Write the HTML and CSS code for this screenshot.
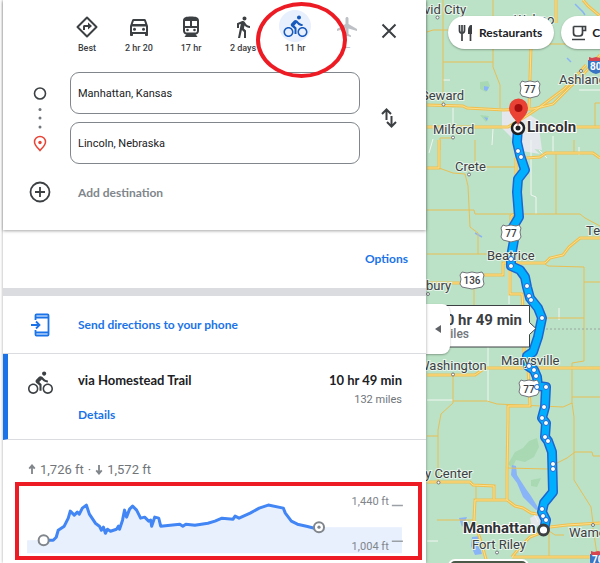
FILE: index.html
```
<!DOCTYPE html>
<html lang="en">
<head>
    <meta charset="UTF-8">
    <meta name="viewport" content="width=device-width, initial-scale=1.0">
    <title>Manhattan, Kansas to Lincoln, Nebraska</title>
    <link rel="stylesheet" href="styles.css">
</head>
<body>
    <main class="panel">
        <form class="search">
            <div class="modes">
                <button type="button" class="mode">
                    <svg viewBox="0 0 24 24"><path d="M12 2.500L21.500 12L12 21.500L2.500 12Z" fill="none" stroke="#3c4043" stroke-width="2" stroke-linejoin="round"/><path d="M8 15v-3.500c0-.8.7-1.500 1.500-1.500H13V7.500l4 3.500-4 3.500V12h-3v3z"/></svg>
                    <span>Best</span>
                </button>
                <button type="button" class="mode">
                    <svg viewBox="0 0 24 24"><path d="M18.920 5.010C18.720 4.420 18.160 4 17.500 4h-11c-.66 0-1.210.42-1.420 1.010L3 11v9c0 .55.45 1 1 1h1c.55 0 1-.45 1-1v-1h12v1c0 .55.45 1 1 1h1c.55 0 1-.45 1-1v-9l-2.080-5.990zM6.850 6h10.290l1.080 3.110H5.770L6.850 6zM19 17H5v-5.500h14V17z"/><circle cx="7.500" cy="14.200" r="1.500"/><circle cx="16.500" cy="14.200" r="1.500"/></svg>
                    <span>2 hr 20</span>
                </button>
                <button type="button" class="mode">
                    <svg viewBox="0 0 24 24"><path d="M12 1.500c-4.500 0-8 .5-8 4.200V16c0 1.900 1.600 3.500 3.500 3.500h9c1.900 0 3.500-1.600 3.500-3.500V5.700c0-3.700-3.500-4.200-8-4.200zM6 6h5v5H6zm7 0h5v5h-5zM6 13h12v3c0 .8-.7 1.500-1.500 1.500h-9C6.700 17.500 6 16.800 6 16z" fill-rule="evenodd"/><circle cx="8.500" cy="15" r="1.300"/><circle cx="15.500" cy="15" r="1.300"/><path d="M7.500 19h9l2 3h-13z"/></svg>
                    <span>17 hr</span>
                </button>
                <button type="button" class="mode">
                    <svg viewBox="0 0 24 24"><path d="M13.500 5.500c1.100 0 2-.9 2-2s-.9-2-2-2-2 .9-2 2 .9 2 2 2zM9.800 8.900L7 23h2.100l1.800-8 2.100 2v6h2v-7.500l-2.100-2 .6-3C14.800 12 16.800 13 19 13v-2c-1.900 0-3.500-1-4.300-2.400l-1-1.600c-.4-.6-1-1-1.700-1-.3 0-.5.1-.8.100L6 8.300V13h2V9.600l1.800-.7"/></svg>
                    <span>2 days</span>
                </button>
                <button type="button" class="mode active">
                    <i class="halo"></i>
                    <svg viewBox="0 0 24 24"><path d="M15.500 4.500c1.100 0 2-.9 2-2s-.9-2-2-2-2 .9-2 2 .9 2 2 2zM5 12c-2.800 0-5 2.200-5 5s2.200 5 5 5 5-2.200 5-5-2.200-5-5-5zm0 8.500c-1.900 0-3.500-1.600-3.500-3.500s1.600-3.500 3.500-3.500 3.500 1.600 3.500 3.500-1.600 3.500-3.500 3.500zm5.800-10l2.400-2.400.8.800c1.300 1.300 3 2.100 5.100 2.100V9c-1.500 0-2.700-.6-3.600-1.500l-1.900-1.900c-.5-.4-1-.6-1.600-.6s-1.100.2-1.400.6L7.800 8.400c-.4.4-.6.9-.6 1.400 0 .6.200 1.100.6 1.400L11 14v5h2v-6.200l-2.200-2.300zM19 12c-2.800 0-5 2.200-5 5s2.200 5 5 5 5-2.200 5-5-2.200-5-5-5zm0 8.500c-1.900 0-3.500-1.600-3.500-3.500s1.600-3.500 3.500-3.500 3.500 1.600 3.500 3.500-1.600 3.500-3.500 3.500z"/></svg>
                    <span>11 hr</span>
                    <i class="marker-ring"></i>
                </button>
                <button type="button" class="mode disabled">
                    <svg viewBox="0 0 24 24"><path d="M22 16v-2l-8.500-5V3.500c0-.83-.67-1.500-1.500-1.500s-1.500.67-1.500 1.500V9L2 14v2l8.500-2.500V19L8 20.500V22l4-1 4 1v-1.500L13.500 19v-5.500L22 16z"/></svg>
                    <span>—</span>
                </button>
                <button type="button" class="close" aria-label="Close">
                    <svg viewBox="0 0 16 16"><path d="M1.500 1.500l13 13M14.500 1.500l-13 13" stroke="#3c4043" stroke-width="2"/></svg>
                </button>
            </div>

            <div class="stops">
                <svg class="stop-icons" viewBox="0 0 40 92">
                    <circle cx="20" cy="21.500" r="5.500" fill="none" stroke="#3c4043" stroke-width="1.600"/>
                    <g fill="#70757a"><circle cx="20" cy="37.500" r="1.500"/><circle cx="20" cy="46" r="1.500"/><circle cx="20" cy="55" r="1.500"/></g>
                    <path d="M20 78.500c-3-3.500-5.500-5.700-5.500-8.600a5.500 5.500 0 0 1 11 0c0 2.900-2.500 5.100-5.500 8.600z" fill="none" stroke="#ea4335" stroke-width="1.500"/>
                    <circle cx="20" cy="70.500" r="1.700" fill="#ea4335"/>
                </svg>
                <div class="fields">
                    <input type="text" aria-label="Starting point" value="Manhattan, Kansas">
                    <input type="text" aria-label="Destination" value="Lincoln, Nebraska">
                </div>
                <button type="button" class="swap" aria-label="Reverse starting point and destination">
                    <svg viewBox="0 0 16 20"><path d="M5.500 12V2M1 6l4.500-4.500L10 6M10.500 8v10M6 14l4.500 4.500L15 14" fill="none" stroke="#3c4043" stroke-width="2"/></svg>
                </button>
            </div>

            <button type="button" class="add">
                <svg viewBox="0 0 22 22"><path d="M11 6v10M6 11h10" stroke="#3c4043" stroke-width="1.800"/><circle cx="11" cy="11" r="9.500" fill="none" stroke="#3c4043" stroke-width="1.800"/></svg>
                <span>Add destination</span>
            </button>
        </form>

        <div class="results">
            <div class="options"><a href="#options">Options</a></div>

            <a class="send" href="#send">
                <svg viewBox="0 0 20 24"><path d="M5.500 7V2.500c0-.6.400-1 1-1h11c.6 0 1 .4 1 1v19c0 .6-.4 1-1 1h-11c-.6 0-1-.4-1-1V17M5.500 4.500h13M5.500 19.500h13M1 12h8M6 8.500L9.500 12 6 15.500" fill="none" stroke="#1a73e8" stroke-width="1.800"/></svg>
                <span>Send directions to your phone</span>
            </a>

            <section class="route">
                <svg class="route-icon" viewBox="0 0 24 24"><path d="M15.500 4.500c1.100 0 2-.9 2-2s-.9-2-2-2-2 .9-2 2 .9 2 2 2zM5 12c-2.800 0-5 2.200-5 5s2.200 5 5 5 5-2.200 5-5-2.200-5-5-5zm0 8.500c-1.900 0-3.500-1.600-3.500-3.500s1.600-3.500 3.500-3.500 3.500 1.600 3.500 3.500-1.600 3.500-3.500 3.500zm5.800-10l2.400-2.400.8.800c1.300 1.300 3 2.100 5.100 2.100V9c-1.500 0-2.700-.6-3.600-1.500l-1.900-1.900c-.5-.4-1-.6-1.600-.6s-1.100.2-1.400.6L7.800 8.400c-.4.400-.6.900-.6 1.400 0 .6.200 1.100.6 1.400L11 14v5h2v-6.200l-2.200-2.300zM19 12c-2.800 0-5 2.200-5 5s2.200 5 5 5 5-2.200 5-5-2.200-5-5-5zm0 8.500c-1.900 0-3.500-1.600-3.500-3.500s1.600-3.500 3.500-3.500 3.500 1.600 3.500 3.500-1.600 3.500-3.500 3.500z"/></svg>
                <div class="route-name">
                    <h1>via Homestead Trail</h1>
                    <a href="#details">Details</a>
                </div>
                <div class="route-time">
                    <strong>10 hr 49 min</strong>
                    <span>132 miles</span>
                </div>
            </section>

            <p class="climb">
                <svg viewBox="0 0 8 12"><path d="M4 11V2M1 5l3-3.500L7 5" fill="none" stroke="#80868b" stroke-width="2"/></svg>
                <span>1,726 ft</span>
                <span>·</span>
                <svg viewBox="0 0 8 12"><path d="M4 1v9M1 7l3 3.500L7 7" fill="none" stroke="#80868b" stroke-width="2"/></svg>
                <span>1,572 ft</span>
            </p>

            <div class="elevation">
                <svg viewBox="20 486 397 70">
                    <path class="area" d="M28 540H44L54 540 58 536 60 529 66 523 70 515 72 511 76 515 81 513 87 505 90 512 96 523 101 527 107 533 117 529 122 523 125 510 127 516 131 507 135 507 142 518 149 521 152 525 155 517 161 526 180 524 198 523 212 521 222 518 234 518 250 512 260 508 268 505 283 508 291 521 299 525 310 527H401V553H28Z"/>
                    <path class="line" d="M44 540L54 540 57 537 59 530 65 526 69 518 71 511 75 515 78 512 80 514 83 508 87 505 90 514 96 523 100 526 102 530 104 527 106 533 108 529 111 531 117 529 119 526 120 529 123 520 125 510 127 517 130 509 133 506 137 510 141 518 145 517 149 521 151 520 152 526 155 517 159 518 161 526 180 524 183 526 186 524 195 525 208 523 215 521 222 518 233 519 235 516 239 518 250 513 259 508 268 505 283 508 285 513 291 521 297 524 306 526 314 528"/>
                    <circle cx="44.500" cy="540" r="5" fill="#fff" stroke="#80868b" stroke-width="2"/>
                    <circle cx="318.500" cy="527" r="5" fill="#fff" stroke="#80868b" stroke-width="2"/>
                    <circle cx="318.500" cy="527" r="1.600" fill="#80868b"/>
                    <path d="M391 505.500h11M391 541h11" stroke="#9aa0a6" stroke-width="1.500"/>
                    <text x="388" y="505" text-anchor="end">1,440 ft</text>
                    <text x="388" y="550" text-anchor="end">1,004 ft</text>
                </svg>
            </div>
        </div>
    </main>

    <div class="map">
        <!-- viewBox starts where the panel ends -->
        <svg class="canvas" viewBox="426 0 174 563" preserveAspectRatio="xMinYMin slice">
            <defs>
                <path id="trip" d="M518 128L517 142 520 155 525 170 518 179 517 192 519 217 513 227 514 240 511 257 511 266 520 270 525 277 527 287 530 298 538 308 542 318 538 337 533 352 527 356 528 366 534 370 537 377 538 386 546 387 545 407 542 418 546 423 545 437 548 441 552 452 553 492 544 503 542 512 546 520 544 530"/>
            </defs>
            <rect x="426" width="600" height="563" fill="#bbe2c6"/>
            <g fill="#a8d9b3">
                <path d="M480 82l8-1 2 5-4 6-6-3zM480 115l9 1-3 6zM529 441l8-3 2 9-5 10-9 5-9-2-4 8-4-4 7-12 8-4zM531 480l10-2-4 9-6-1z"/>
            </g>
            <g fill="#8ab4f8">
                <path d="M484 86l5 1-2 4-3-1zM484 117l4 1-1 3zM512 465l4 1 1 9 9 14 5 7 8 13-3 1-13-13-6-14-6-8zM459 518l8-1-2 5-3 5zM472 537l9-1-2 8 3 10-7 1-4-9z"/>
                <path d="M575 4l8 8 2 3M567 58l4 4M475 233l7 4" fill="none" stroke="#8ab4f8" stroke-width="1.500"/>
            </g>
            <path d="M502 111l18-2 18 11 4 30-16-2-14-10-10-10zM524 140l16 14-18-3zM530 518l7-4 5 10-10 4z" fill="#e4e7eb"/>
            <g class="white-road">
                <path d="M443 80h7M433 139l-4 14M453 108v18M493 129l-1 16M553 136v18M531 140v55l5 2v17M559 308v12M488 347v55M427 400h26M427 541h11M509 266v38M579 147v8M579 90h21M539 150l8 8M534 514l4 8"/>
            </g>
            <g class="minor-road">
                <path d="M427 32l6-2h15M443 0v105M493 0v67l7 18v23M443 62h50M543 44h57M595 127v-24h5M440 150v-12h12M475 140v27h41M427 168h12l14 5 12 1 3 12 2 41 8 6v21M427 210h47l1 4h105l5 4 15 8M427 254h80M556 153v61M574 140v13M545 264l3 2 36 1v94l-12 2v34h28M584 282h16M474 283v22M543 318h41M453 375v28l-12 11-3 16v52M453 401h34l10 3 66 3 9-4 2 14v63l17 27 2 16M572 397v7M427 436h11M507 468l41 1M557 463l10-5 8-6h17l1 4h7M476 485v14M437 520h37M549 530v27M549 531l6 4h9M593 528l4 26"/>
            </g>
            <g class="road">
                <path id="roads" d="M427 105l36 1 4 2 37 2 16-1h13l20-5 17-17 11-10 19-22M427 127h81l20-12 12-8 24-18 22-24M531 48l-2 60M541 127h59M556 0v23M583 0l5 6 12 10M439 140v28h-12M517 130v28h10l13-1 6-4h47l7 5M516 158v55l-5 3v47h34l5-5 13-3 6-8 11-9h20M509 263h-6v12h-23M427 283h33M510 266v28h12l2 30v41M600 368H485l-10 7h-48M528 367l2 39h-22v13l-1 51v30l8 6 8 2 8 5 12 2M427 482h43l3 3 21 1v13M507 500h-32l-1 20 8 25 5 18M550 527l17-2 33-2M548 530l-18 7-10 10-8 10M512 557h88"/>
                <use href="#roads" class="road-center"/>
            </g>
            <path d="M546 329h54" stroke="#98a9a0" stroke-width="1" stroke-dasharray="2 2"/>

            <g class="towns">
                <text x="424" y="14">vid City</text>
                <text x="514" y="24">Wahoo</text>
                <text x="421" y="100">Seward</text>
                <text x="433" y="134">Milford</text>
                <text x="559" y="84">Ashland</text>
                <text x="455" y="171">Crete</text>
                <text x="586" y="235">Tecumseh</text>
                <text x="426" y="290">bury</text>
                <text x="418" y="370">Washington</text>
                <text x="425" y="478">y Center</text>
                <text x="472" y="549">Fort Riley</text>
                <text x="569" y="537">Wamego</text>
            </g>
            <g fill="#fff" stroke="#70757a">
                <circle cx="437.500" cy="17.500" r="1.500"/><circle cx="443.500" cy="104.500" r="1.500"/><circle cx="453" cy="137.500" r="1.500"/><circle cx="581" cy="71" r="1.500"/><circle cx="469" cy="174.500" r="1.500"/><circle cx="428" cy="294" r="1.500"/><circle cx="453" cy="374.500" r="1.500"/><circle cx="438.500" cy="482.500" r="1.500"/><circle cx="497" cy="552.500" r="1.500"/><circle cx="593" cy="525" r="1.500"/>
            </g>

            <use href="#trip" class="route-edge"/>
            <use href="#trip" class="route-fill"/>

            <g class="towns">
                <text x="487" y="260">Beatrice</text>
                <text x="501" y="365">Marysville</text>
            </g>

            <g class="shields">
                <path id="shield" d="M522 81l3 1 5-1 5 1 3-1 2 3-1 4 1 5-2 3-4 1-4 1-4-1-4-1-2-3 1-5-1-4z"/>
                <use href="#shield" x="-19" y="144"/>
                <use href="#shield" x="-1" y="299"/>
                <path d="M462 272l5 1 5-1 5 1 5-1 2 3-1 4 1 5-2 3-10 2-10-2-2-3 1-5-1-4z"/>
                <text x="530" y="93">77</text>
                <text x="511" y="237">77</text>
                <text x="529" y="393">77</text>
                <text x="472" y="284">136</text>
            </g>
            <g fill="#fff" stroke="#1967d2" stroke-width="1">
                <circle cx="518" cy="151" r="2.500"/><circle cx="521" cy="157" r="2.500"/><circle cx="511" cy="259" r="2.500"/><circle cx="511" cy="266" r="2.500"/><circle cx="527" cy="286" r="2.500"/><circle cx="529" cy="296" r="2.500"/><circle cx="531" cy="300" r="2.500"/><circle cx="542" cy="318" r="2.500"/><circle cx="529" cy="366" r="2.500"/><circle cx="534" cy="370" r="2.500"/><circle cx="536" cy="376" r="2.500"/><circle cx="537" cy="387" r="2.500"/><circle cx="546" cy="387" r="2.500"/><circle cx="544" cy="407" r="2.500"/><circle cx="542" cy="418" r="2.500"/><circle cx="546" cy="423" r="2.500"/><circle cx="545" cy="437" r="2.500"/><circle cx="548" cy="441" r="2.500"/><circle cx="553" cy="464" r="2.500"/><circle cx="553" cy="469" r="2.500"/><circle cx="542" cy="509" r="2.500"/><circle cx="543" cy="516" r="2.500"/><circle cx="546" cy="520" r="2.500"/>
            </g>
            <g class="interstate">
                <path d="M588 60h16v8q-1 4-8 6-7-2-8-6zM590 554h16v8q-1 4-8 6-7-2-8-6z" fill="#3a74c4"/>
                <path d="M589 57l3 1 4-1 4 1 4-1v4h-15zM591 551l3 1 4-1 4 1 4-1v4h-15z" fill="#d64550"/>
                <text x="590" y="70">80</text>
                <text x="592" y="563">70</text>
            </g>

            <path d="M400 305.500h129.500v17l6.500 6-6.500 6v12.500H400z" fill="#fff" stroke="#3c4043"/>
            <text class="trip-time" x="522" y="325" text-anchor="end">10 hr 49 min</text>
            <text class="trip-miles" x="469" y="338" text-anchor="end">132 miles</text>

            <circle cx="518" cy="128" r="6" fill="#fff" stroke="#202124" stroke-width="2.500"/>
            <circle cx="518" cy="128" r="2.500" fill="#202124"/>
            <path d="M518 126c-1-7-9-10-9-18a9.500 9.500 0 0 1 19 0c0 8-8 11-10 18z" fill="#ea4335"/>
            <circle cx="518.500" cy="108" r="4" fill="#a50e0e"/>
            <circle cx="543.500" cy="530" r="5" fill="#fff" stroke="#3c4043" stroke-width="2.800"/>
            <g class="cities">
                <text x="527" y="132">Lincoln</text>
                <text x="463" y="533">Manhattan</text>
            </g>
            <rect x="449" y="560" width="79" height="79" rx="6" fill="#4b5a48" stroke="#fff" stroke-width="2"/>
        </svg>

        <div class="chips">
            <button type="button" class="chip">
                <svg viewBox="0 0 16 16"><path d="M1.500 0v5.500c0 1.500 1 2.500 2.500 2.500v8M6.500 0v5.500C6.500 7 5.500 8 4 8M4 0v7M12.500 16V0.500" fill="none" stroke="#3c4043" stroke-width="1.700"/><path d="M14 0c-2.500 0-4 2-4 5v4h4z"/></svg>
                Restaurants
            </button>
            <button type="button" class="chip">
                <svg viewBox="0 0 16 16"><path d="M2.500 1.500h12v4h-3M2.500 1.500v6.500a3 3 0 0 0 3 3h3a3 3 0 0 0 3-3V1.500M1 14.500h13" fill="none" stroke="#3c4043" stroke-width="1.700"/></svg>
                Coffee
            </button>
        </div>
        <button type="button" class="collapse" aria-label="Collapse side panel">
            <svg viewBox="0 0 6 8"><path d="M6 0v8L0 4z"/></svg>
        </button>
    </div>
</body>
</html>
```
FILE: styles.css
```
* {
    box-sizing: border-box;
}
body {
    display: flex;
    height: 100vh;
    margin: 0;
    overflow: hidden;
    font-family: Roboto, "Liberation Sans", sans-serif;
    font-size: 12px;
    color: #3c4043;
    background-color: #fff;
}
button {
    padding: 0;
    border: 0;
    background: none;
    font: inherit;
    color: inherit;
    cursor: pointer;
}
a {
    color: #1a73e8;
    text-decoration: none;
}
svg {
    display: block;
}
.panel {
    position: relative;
    z-index: 1;
    flex: 0 0 423px;
    margin-left: 3px;
    background-color: #fff;
    box-shadow: 0 0 3px rgba(0,0,0,0.35);
}

/* Search box */
.search {
    position: relative;
    height: 230px;
    padding-top: 10px;
    box-shadow: 0 1px 3px rgba(0,0,0,0.35);
}
.modes {
    display: flex;
    padding-left: 58px;
}
.mode {
    position: relative;
    display: flex;
    flex-direction: column;
    align-items: center;
    width: 52px;
    height: 44px;
    padding-top: 5px;
    font-size: 9px;
    font-weight: 500;
    line-height: 12px;
    white-space: nowrap;
}
.mode svg {
    position: relative;
    width: 24px;
    height: 24px;
    margin-bottom: 3px;
    fill: #3c4043;
}
.mode.active svg {
    width: 25px;
    fill: #185abc;
}
.mode.disabled svg {
    fill: #bdc1c6;
}
.mode.disabled span {
    color: #bdc1c6;
}
.halo {
    position: absolute;
    top: 0;
    left: 10px;
    width: 32px;
    height: 32px;
    border-radius: 50%;
    background-color: #e8f0fe;
}
.marker-ring {
    position: absolute;
    z-index: 2;
    top: -8px;
    left: -13px;
    width: 91px;
    height: 76px;
    border: 4px solid #ed1c24;
    border-radius: 50%;
}
.close,
.swap {
    display: flex;
    align-items: center;
    justify-content: center;
}
.close {
    width: 32px;
    height: 42px;
}
.close svg {
    width: 16px;
    height: 16px;
}
.stops {
    display: flex;
    align-items: center;
    padding: 18px 0 0 17px;
}
.stop-icons {
    width: 40px;
    height: 92px;
    margin-right: 10px;
}
.fields {
    display: flex;
    flex-direction: column;
    gap: 8px;
    width: 290px;
}
.fields input {
    height: 42px;
    padding: 0 7px;
    border: 1px solid #80868b;
    border-radius: 9px;
    font: inherit;
    font-size: 11px;
    color: #202124;
}
.swap {
    width: 58px;
    height: 36px;
}
.swap svg {
    width: 16px;
    height: 20px;
}
.add {
    display: flex;
    align-items: center;
    gap: 27px;
    height: 22px;
    margin: 17px 0 0 26px;
    color: #80868b;
}
.add svg {
    width: 22px;
    height: 22px;
}

/* Results */
.add,
.options,
.send,
.route-name,
.route-time strong,
.chip {
    font-family: Lato, Roboto, sans-serif;
    font-weight: 700;
}
.options {
    display: flex;
    align-items: center;
    justify-content: flex-end;
    height: 66px;
    padding: 0 18px 2px 0;
    border-bottom: 8px solid #dadce0;
}
.send {
    display: flex;
    align-items: center;
    gap: 28px;
    height: 58px;
    padding-left: 27px;
    border-bottom: 1px solid #dadce0;
}
.send svg {
    width: 20px;
    height: 24px;
}
.route {
    display: flex;
    height: 86px;
    padding: 18px 24px 0 18px;
    border-left: 5px solid #1a73e8;
    border-bottom: 1px solid #dadce0;
}
.route-icon {
    width: 25px;
    height: 25px;
    margin: -1px 25px 0 2px;
    fill: #3c4043;
}
.route-name {
    flex: 1;
    display: flex;
    flex-direction: column;
    gap: 19px;
    line-height: 16px;
}
.route-name h1 {
    margin: 0;
    font-size: 13px;
    color: #202124;
}
.route-time {
    display: flex;
    flex-direction: column;
    gap: 4px;
    text-align: right;
    line-height: 16px;
    color: #70757a;
}
.route-time span {
    font-size: 11px;
}
.route-time strong {
    font-size: 13px;
    color: #202124;
}
.climb {
    display: flex;
    align-items: center;
    gap: 4px;
    height: 42px;
    margin: 0;
    padding: 16px 0 0 25px;
    font-size: 13px;
    color: #70757a;
}
.climb svg {
    width: 8px;
    height: 11px;
}
.elevation {
    margin: 0 4px 0 12px;
    border: 4px solid #ed1c24;
}
.elevation svg {
    width: 100%;
}
.elevation text {
    font-size: 11px;
    fill: #80868b;
}
.area {
    fill: #e8f0fe;
}
.line {
    fill: none;
    stroke: #4285f4;
    stroke-width: 3;
    stroke-linejoin: round;
}

/* Map */
.map {
    position: relative;
    flex: 1;
    min-width: 0;
    overflow: hidden;
}
.canvas {
    width: 100%;
    height: 100%;
}
.white-road {
    fill: none;
    stroke: #f1f5f2;
    stroke-width: 1;
}
.minor-road {
    fill: none;
    stroke: #e8bf55;
    stroke-width: 1;
}
.road {
    fill: none;
    stroke: #efbf4f;
    stroke-width: 3;
}
.road-center {
    stroke: #fce08e;
    stroke-width: 1;
}
.route-edge,
.route-fill {
    fill: none;
    stroke: #1967d2;
    stroke-width: 10;
    stroke-linejoin: round;
}
.route-fill {
    stroke: #00b0ff;
    stroke-width: 7;
}
.towns text,
.cities text {
    font-size: 13px;
    fill: #3c4043;
    stroke: #e6f4ea;
    stroke-width: 2px;
    paint-order: stroke;
}
.cities text {
    font-size: 15px;
    font-weight: 700;
    fill: #303134;
    stroke: #fff;
}
.shields path {
    fill: #fff;
    stroke: #70757a;
}
.shields text {
    font-size: 10px;
    font-weight: 500;
    fill: #3c4043;
    text-anchor: middle;
}
.interstate text {
    font-size: 10px;
    font-weight: 700;
    fill: #fff;
}
.trip-time {
    font-size: 15px;
    font-weight: 700;
    fill: #3c4043;
}
.trip-miles {
    font-size: 12px;
    font-weight: 500;
    fill: #70757a;
}
.chips {
    position: absolute;
    top: 16px;
    left: 22px;
    display: flex;
    gap: 7px;
}
.chip {
    display: flex;
    align-items: center;
    gap: 5px;
    height: 33px;
    padding: 0 12px 0 10px;
    border-radius: 17px;
    background-color: #fff;
    box-shadow: 0 1px 2px rgba(0,0,0,0.3);
    font-size: 12px;
    color: #202124;
}
.chip svg {
    width: 16px;
    height: 16px;
    fill: #3c4043;
}
.collapse {
    position: absolute;
    top: 304px;
    left: 0;
    display: flex;
    align-items: center;
    justify-content: center;
    width: 24px;
    height: 50px;
    border-radius: 0 8px 8px 0;
    background-color: #fff;
    box-shadow: 0 1px 2px rgba(0,0,0,0.3);
}
.collapse svg {
    width: 6px;
    height: 8px;
    fill: #5f6368;
}
```
